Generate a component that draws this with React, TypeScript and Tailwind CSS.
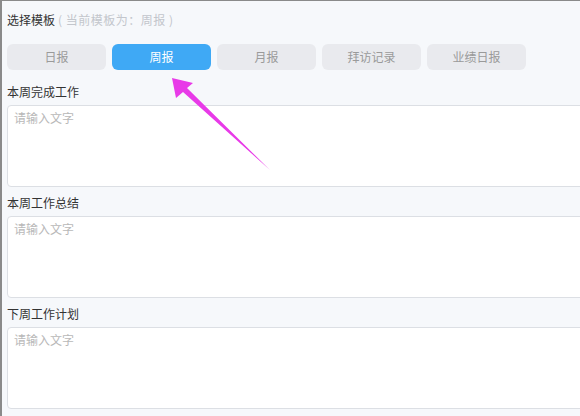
import { useState } from 'react';

const templates = ['日报', '周报', '月报', '拜访记录', '业绩日报'];

const sections = ['本周完成工作', '本周工作总结', '下周工作计划'];

function Pointer() {
  // magenta hand-drawn arrow pointing at the active tab
  return (
    <svg
      className="absolute left-0 top-0 pointer-events-none"
      width="580"
      height="416"
      viewBox="0 0 580 416"
    >
      <polygon
        points="170,77 174,97 181,91 268,169 185,87 191,82"
        fill="#e83ae8"
      />
    </svg>
  );
}

export default function App() {
  const [current, setCurrent] = useState('周报');

  return (
    <div
      className="relative w-[580px] h-[416px] overflow-hidden bg-[#f6f8fb] border-l-2 border-t border-[#8a8a8a] pl-[5px]"
      style={{ fontFamily: '"Noto Sans CJK SC", "Noto Sans", sans-serif' }}
    >
      {/* Template picker */}
      <div className="pt-[11px] text-[12px] leading-[16px] text-[#333]">
        选择模板
        <span className="text-[#c3c6cc] ml-[3px] tracking-[0.5px]">( 当前模板为：{current} )</span>
      </div>

      <div className="mt-[16px] flex gap-[6px]">
        {templates.map((name) => (
          <button
            key={name}
            onClick={() => setCurrent(name)}
            className={`w-[99px] h-[26px] rounded-[6px] text-[12px] leading-[26px] ${
              current === name ? 'bg-[#3fa9f5] text-white' : 'bg-[#e9eaee] text-[#9a9a9a]'
            }`}
          >
            {name}
          </button>
        ))}
      </div>

      {/* Report fields */}
      <div className="mt-[14px]">
        {sections.map((label, i) => (
          <div key={label} className={i > 0 ? 'mt-[8px]' : ''}>
            <div className="text-[12px] leading-[16px] text-[#333] mb-[5px]">{label}</div>
            <textarea
              placeholder="请输入文字"
              className="block w-[640px] h-[82px] resize-none rounded-[4px] border border-[#dcdfe4] bg-white px-[6px] py-[3px] text-[12px] leading-[18px] text-[#333] placeholder:text-[#b8b8b8] outline-none"
            />
          </div>
        ))}
      </div>

      <Pointer />
    </div>
  );
}
